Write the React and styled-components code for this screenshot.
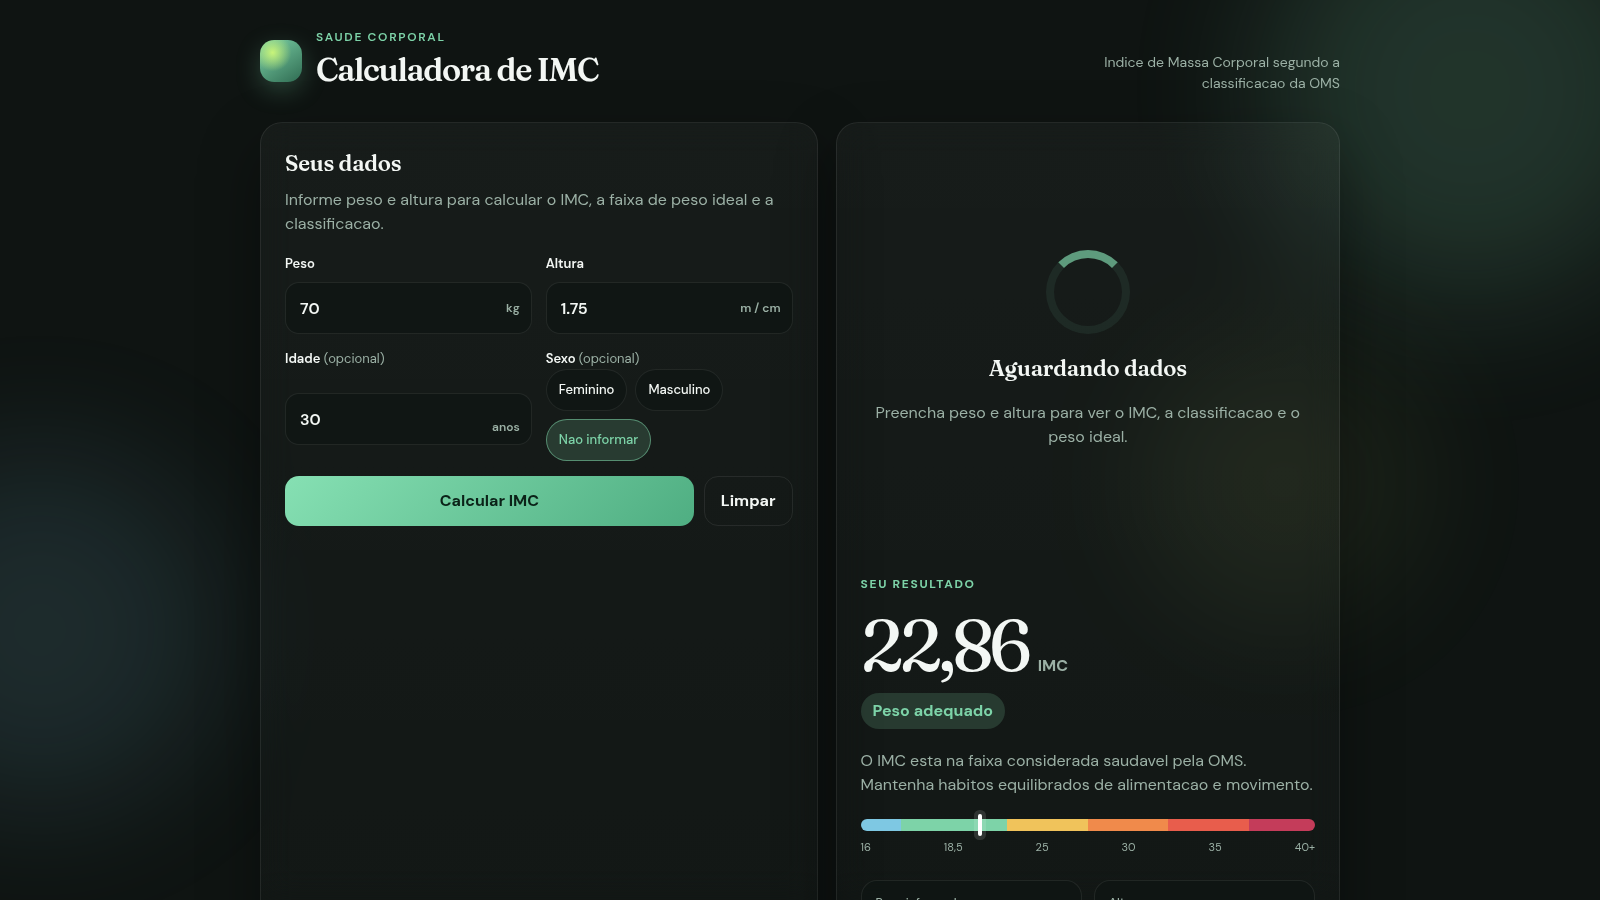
import React, { useState } from 'react';
import styled, { createGlobalStyle } from 'styled-components'

const GlobalStyle = createGlobalStyle`
* { box-sizing: border-box; }
body {
    margin: 0;
    min-height: 100vh;
    background: #0f1412;
    color: #f3f7f4;
    font-family: "DM Sans", "Open Sans", "Noto Sans", sans-serif;
    font-size: 16px;
    line-height: 24px;
    -webkit-font-smoothing: antialiased;
}
h1, h2, p { margin: 0; }
button, input { font: inherit; }
`

const serif = `"Fraunces", "Liberation Serif", "Times New Roman", serif`

const Backdrop = styled.div`
position: fixed;
inset: 0;
overflow: hidden;
z-index: -1;
pointer-events: none;
`

const Blob = styled.span`
position: absolute;
border-radius: 50%;
filter: blur(70px);
opacity: 0.17;
width: ${props => props.$size}px;
height: ${props => props.$size}px;
background: ${props => props.$color};
`

const GreenBlob = styled(Blob)`
top: -120px;
right: -80px;
`

const BlueBlob = styled(Blob)`
bottom: 10%;
left: -140px;
opacity: 0.13;
`

const LimeBlob = styled(Blob)`
top: 38%;
right: 11%;
opacity: 0.07;
`

const Page = styled.div`
width: 100%;
max-width: 1128px;
margin: 0 auto;
padding: 28px 24px 48px;
`

const Header = styled.header`
display: flex;
align-items: flex-end;
justify-content: space-between;
gap: 24px;
margin-bottom: 28px;
`

const Brand = styled.div`
display: flex;
align-items: center;
gap: 14px;
`

const Logo = styled.div`
width: 42px;
height: 42px;
flex: none;
border-radius: 14px;
background:
    radial-gradient(circle at 30% 30%, #c8f47a, transparent 45%),
    linear-gradient(145deg, #7dd3a8, #2f6b52);
box-shadow: 0 8px 24px rgba(125, 211, 168, 0.25);
`

const Eyebrow = styled.p`
color: #7dd3a8;
font-size: 12px;
line-height: 18px;
font-weight: ${props => (props.$strong ? 700 : 600)};
letter-spacing: 0.14em;
text-transform: uppercase;
`

const Title = styled.h1`
font-family: ${serif};
font-size: 32px;
line-height: 48px;
font-weight: 600;
letter-spacing: -0.04em;
`

const Tagline = styled.p`
max-width: 260px;
color: #9bb0a5;
font-size: 14px;
line-height: 21px;
text-align: right;
`

const Columns = styled.main`
display: grid;
grid-template-columns: 1.05fr 0.95fr;
gap: 18px;
`

const Panel = styled.section`
min-width: 0;
padding: 24px;
border: 1px solid rgba(255, 255, 255, 0.08);
border-radius: 22px;
background: linear-gradient(180deg, rgba(255, 255, 255, 0.035), rgba(255, 255, 255, 0.015));
box-shadow: 0 24px 60px rgba(0, 0, 0, 0.35);
backdrop-filter: blur(16px);
`

const PanelTitle = styled.h2`
font-family: ${serif};
font-size: 22px;
line-height: 33px;
font-weight: 600;
letter-spacing: -0.01em;
`

const Muted = styled.p`
color: #9bb0a5;
`

const Lead = styled(Muted)`
margin-top: 8px;
`

const Form = styled.form`
display: grid;
gap: 15px;
margin-top: 18px;
`

const FieldGrid = styled.div`
display: grid;
grid-template-columns: 1fr 1fr;
gap: 15px 14px;
`

const Field = styled.div`
display: grid;
gap: 8px;
min-width: 0;
`

const Label = styled.label`
font-size: 13px;
line-height: 20px;
font-weight: 600;
`

const Optional = styled.span`
color: #9bb0a5;
font-weight: 400;
`

const InputWrap = styled.div`
position: relative;
`

const Input = styled.input`
width: 100%;
height: 52px;
padding: 0 64px 0 14px;
border: 1px solid rgba(255, 255, 255, 0.08);
border-radius: 14px;
outline: none;
background: rgba(14, 22, 19, 0.7);
color: #f3f7f4;
font-weight: 600;
&:focus { border-color: #7dd3a8; }
`

const Unit = styled.span`
position: absolute;
top: 50%;
right: 12px;
transform: translateY(-50%);
color: #9bb0a5;
font-size: 12px;
line-height: 18px;
font-weight: 600;
pointer-events: none;
`

const SexGroup = styled.fieldset`
min-width: 0;
margin: 0;
padding: 0;
border: 0;
`

const Legend = styled.legend`
padding: 0;
font-size: 13px;
line-height: 20px;
font-weight: 600;
`

const Chips = styled.div`
display: flex;
flex-wrap: wrap;
gap: 8px;
`

const Chip = styled.label`
position: relative;
padding: 10px 12px;
border: 1px solid ${props => (props.$active ? 'rgba(125, 211, 168, 0.55)' : 'rgba(255, 255, 255, 0.08)')};
border-radius: 21px;
background: ${props => (props.$active ? 'rgba(125, 211, 168, 0.18)' : 'rgba(14, 22, 19, 0.7)')};
color: ${props => (props.$active ? '#7dd3a8' : '#f3f7f4')};
font-size: 13px;
line-height: 20px;
font-weight: 500;
cursor: pointer;

input {
    position: absolute;
    inset: 0;
    margin: 0;
    opacity: 0;
    cursor: pointer;
}
`

const Actions = styled.div`
display: flex;
gap: 10px;
`

const Button = styled.button`
height: 50px;
padding: 0 16px;
border: 1px solid rgba(255, 255, 255, 0.08);
border-radius: 14px;
background: transparent;
color: #f3f7f4;
font-weight: 700;
cursor: pointer;
`

const PrimaryButton = styled(Button)`
flex: 1;
border: 0;
background: linear-gradient(135deg, #86e0b3, #4fae82);
color: #0b2218;
`

const Empty = styled.div`
display: flex;
flex-direction: column;
align-items: center;
justify-content: center;
min-height: 404px;
text-align: center;
`

const Ring = styled.div`
width: 84px;
height: 84px;
border: 8px solid rgba(125, 211, 168, 0.12);
border-top-color: #7dd3a8;
border-radius: 50%;
opacity: 0.7;
margin-bottom: 18px;
`

const EmptyText = styled(Muted)`
max-width: 440px;
margin-top: 16px;
`

const Result = styled.div`
margin-top: 24px;
`

const Score = styled.div`
display: flex;
align-items: baseline;
gap: 10px;
margin-top: 16px;
`

const ScoreValue = styled.strong`
font-family: ${serif};
font-size: 72px;
line-height: 72px;
font-weight: 500;
letter-spacing: -0.06em;
`

const ScoreUnit = styled.span`
color: #9bb0a5;
font-weight: 700;
`

const Badge = styled.span`
display: inline-block;
margin-top: 12px;
padding: 6px 12px;
border-radius: 18px;
background: rgba(125, 211, 168, 0.18);
color: #7dd3a8;
font-weight: 700;
`

const Description = styled(Muted)`
margin-top: 20px;
`

const Scale = styled.div`
position: relative;
display: flex;
height: 12px;
margin-top: 22px;
`

const Segment = styled.span`
flex: ${props => props.$weight};
background: ${props => props.$color};
&:first-child { border-radius: 6px 0 0 6px; }
&:nth-last-child(2) { border-radius: 0 6px 6px 0; }
`

const Marker = styled.span`
position: absolute;
top: -5px;
width: 4px;
height: 22px;
margin-left: -2px;
border-radius: 2px;
background: #fff;
box-shadow: 0 0 0 4px rgba(255, 255, 255, 0.12);
`

const Ticks = styled.div`
display: flex;
justify-content: space-between;
margin-top: 8px;
color: #9bb0a5;
font-size: 11px;
line-height: 16px;
`

const Stats = styled.div`
display: grid;
grid-template-columns: 1fr 1fr;
gap: 12px;
margin-top: 25px;
`

const Stat = styled.div`
display: grid;
gap: 4px;
padding: 12px 14px;
border: 1px solid rgba(255, 255, 255, 0.08);
border-radius: 16px;
background: rgba(14, 22, 19, 0.7);
`

const StatLabel = styled.span`
color: #9bb0a5;
font-size: 12px;
line-height: 18px;
font-weight: 500;
`

const sexOptions = ['Feminino', 'Masculino', 'Nao informar']

const segments = [
    { color: '#7ec8e3', weight: 40 },
    { color: '#7dd3a8', weight: 106 },
    { color: '#f0c35b', weight: 81 },
    { color: '#f08a4b', weight: 80 },
    { color: '#e85d4c', weight: 81 },
    { color: '#c43c5a', weight: 66 },
]

const ticks = ['16', '18,5', '25', '30', '35', '40+']

const ranges = [
    { max: 18.5, label: 'Abaixo do peso', text: 'O IMC esta abaixo da faixa considerada saudavel pela OMS.' },
    { max: 25, label: 'Peso adequado', text: 'O IMC esta na faixa considerada saudavel pela OMS. Mantenha habitos equilibrados de alimentacao e movimento.' },
    { max: 30, label: 'Sobrepeso', text: 'O IMC esta acima da faixa considerada saudavel pela OMS.' },
    { max: Infinity, label: 'Obesidade', text: 'O IMC esta na faixa de obesidade segundo a OMS.' },
]

const toNumber = (value) => parseFloat(value.replace(',', '.'))

const toMeters = (value) => {
    const height = toNumber(value)
    return height > 3 ? height / 100 : height
}

const format = (value) => value.toFixed(2).replace('.', ',')

// the scale goes from 16 to 42
const markerLeft = (bmi) => `${Math.min(100, Math.max(0, (bmi - 16) / 26 * 100))}%`

function NumberField({ id, label, optional, unit, value, onChange }) {
    return (
        <Field>
            <Label htmlFor={id}>{label}{optional && <Optional> (opcional)</Optional>}</Label>
            <InputWrap>
                <Input id={id} inputMode="decimal" value={value} onChange={ev => onChange(ev.target.value)} />
                <Unit>{unit}</Unit>
            </InputWrap>
        </Field>
    )
}

export default function App() {
    const [weight, setWeight] = useState('70')
    const [height, setHeight] = useState('1.75')
    const [age, setAge] = useState('30')
    const [sex, setSex] = useState('Nao informar')
    const [result, setResult] = useState({ weight: 70, height: 1.75 })

    const bmi = result.weight / (result.height * result.height)
    const range = ranges.find(item => bmi < item.max)

    const onSubmit = (ev) => {
        ev.preventDefault()
        const next = { weight: toNumber(weight), height: toMeters(height) }
        if (!(next.weight > 0) || !(next.height > 0)) return
        setResult(next)
    }

    const onClear = () => {
        setWeight('')
        setHeight('')
        setAge('')
        setSex('Nao informar')
    }

    return (
        <>
            <GlobalStyle />
            <Backdrop>
                <GreenBlob $size={420} $color="#7dd3a8" />
                <BlueBlob $size={360} $color="#7ec8e3" />
                <LimeBlob $size={280} $color="#c8f47a" />
            </Backdrop>
            <Page>
                <Header>
                    <Brand>
                        <Logo />
                        <div>
                            <Eyebrow>Saude corporal</Eyebrow>
                            <Title>Calculadora de IMC</Title>
                        </div>
                    </Brand>
                    <Tagline>Indice de Massa Corporal segundo a classificacao da OMS</Tagline>
                </Header>

                <Columns>
                    <Panel>
                        <PanelTitle>Seus dados</PanelTitle>
                        <Lead>Informe peso e altura para calcular o IMC, a faixa de peso ideal e a classificacao.</Lead>
                        <Form onSubmit={onSubmit}>
                            <FieldGrid>
                                <NumberField id="weight" label="Peso" unit="kg" value={weight} onChange={setWeight} />
                                <NumberField id="height" label="Altura" unit="m / cm" value={height} onChange={setHeight} />
                                <NumberField id="age" label="Idade" optional unit="anos" value={age} onChange={setAge} />
                                <SexGroup>
                                    <Legend>Sexo <Optional>(opcional)</Optional></Legend>
                                    <Chips>
                                        {sexOptions.map(option => (
                                            <Chip key={option} $active={sex === option}>
                                                <input type="radio" name="sex" value={option}
                                                    checked={sex === option} onChange={() => setSex(option)} />
                                                {option}
                                            </Chip>
                                        ))}
                                    </Chips>
                                </SexGroup>
                            </FieldGrid>
                            <Actions>
                                <PrimaryButton type="submit">Calcular IMC</PrimaryButton>
                                <Button type="button" onClick={onClear}>Limpar</Button>
                            </Actions>
                        </Form>
                    </Panel>

                    <Panel>
                        <Empty>
                            <Ring />
                            <PanelTitle>Aguardando dados</PanelTitle>
                            <EmptyText>Preencha peso e altura para ver o IMC, a classificacao e o peso ideal.</EmptyText>
                        </Empty>
                        <Result>
                            <Eyebrow $strong>Seu resultado</Eyebrow>
                            <Score>
                                <ScoreValue>{format(bmi)}</ScoreValue>
                                <ScoreUnit>IMC</ScoreUnit>
                            </Score>
                            <Badge>{range.label}</Badge>
                            <Description>{range.text}</Description>
                            <Scale>
                                {segments.map(item => (
                                    <Segment key={item.color} $color={item.color} $weight={item.weight} />
                                ))}
                                <Marker style={{ left: markerLeft(bmi) }} />
                            </Scale>
                            <Ticks>
                                {ticks.map(tick => <span key={tick}>{tick}</span>)}
                            </Ticks>
                            <Stats>
                                <Stat>
                                    <StatLabel>Peso informado</StatLabel>
                                    <strong>{result.weight} kg</strong>
                                </Stat>
                                <Stat>
                                    <StatLabel>Altura</StatLabel>
                                    <strong>{format(result.height)} m</strong>
                                </Stat>
                            </Stats>
                        </Result>
                    </Panel>
                </Columns>
            </Page>
        </>
    )
}
